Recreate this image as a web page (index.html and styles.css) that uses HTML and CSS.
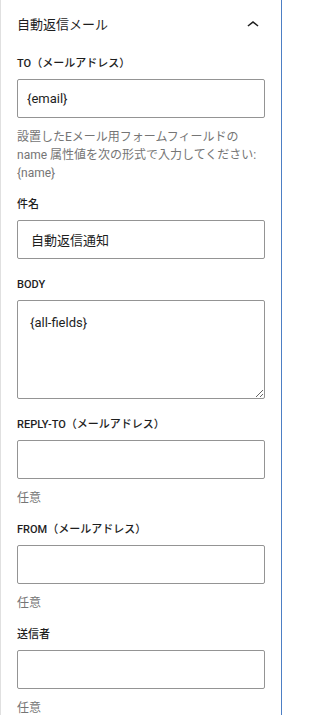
FILE: index.html
```html
<!DOCTYPE html>
<html lang="ja">
<head>
<meta charset="utf-8">
<title>自動返信メール</title>
<link rel="stylesheet" href="styles.css">
</head>
<body>
<div class="panel">
  <div class="panel-header">
    <span class="panel-title">自動返信メール</span>
    <svg class="chevron" width="24" height="24" viewBox="0 0 24 24" aria-hidden="true"><path d="M6.5 12.4L12 8l5.5 4.4-.9 1.2L12 10l-4.6 3.6-1-1.2z"/></svg>
  </div>
  <div class="panel-body">
    <div class="field field--help">
      <label class="field-label">TO（メールアドレス）</label>
      <input class="field-input" type="text" value="{email}">
      <p class="field-help">設置したEメール用フォームフィールドの<br>name 属性値を次の形式で入力してください:<br>{name}</p>
    </div>
    <div class="field">
      <label class="field-label">件名</label>
      <input class="field-input field-input--wide" type="text" value="自動返信通知">
    </div>
    <div class="field">
      <label class="field-label">BODY</label>
      <textarea class="field-textarea">{all-fields}</textarea>
    </div>
    <div class="field field--help">
      <label class="field-label">REPLY-TO（メールアドレス）</label>
      <input class="field-input" type="text" value="">
      <p class="field-help">任意</p>
    </div>
    <div class="field field--help">
      <label class="field-label">FROM（メールアドレス）</label>
      <input class="field-input" type="text" value="">
      <p class="field-help">任意</p>
    </div>
    <div class="field field--help">
      <label class="field-label">送信者</label>
      <input class="field-input" type="text" value="">
      <p class="field-help">任意</p>
    </div>
  </div>
</div>
</body>
</html>
```

FILE: styles.css
```css
* {
  box-sizing: border-box;
}

html, body {
  margin: 0;
  padding: 0;
  background: #ffffff;
}

body {
  font-family: Roboto, "Noto Sans CJK JP", sans-serif;
  color: #1e1e1e;
}

.panel {
  width: 282px;
  min-height: 715px;
  border-left: 1px solid #e0e0e0;
  border-right: 1px solid #4d7fc4;
  background: #ffffff;
}

.panel-header {
  height: 50px;
  padding: 0 16px;
  display: flex;
  align-items: center;
  justify-content: space-between;
}

.panel-title {
  font-size: 13px;
  font-weight: 400;
  line-height: 20px;
  color: #1e1e1e;
}

.chevron {
  display: block;
  fill: #1e1e1e;
}

.panel-body {
  padding: 6px 16px 0;
  display: flex;
  flex-direction: column;
}

.field {
  display: flex;
  flex-direction: column;
  margin-bottom: 18px;
}

.field--help {
  margin-bottom: 15px;
}

.field-label {
  font-size: 11px;
  font-weight: 500;
  line-height: 15px;
  margin-bottom: 8px;
  color: #1e1e1e;
  text-transform: uppercase;
}

.field-input,
.field-textarea {
  display: block;
  width: 100%;
  margin: 0;
  border: 1px solid #949494;
  border-radius: 2px;
  background: #ffffff;
  font-family: Roboto, "Noto Sans CJK JP", sans-serif;
  font-size: 13px;
  color: #1e1e1e;
  outline: none;
}

.field-input {
  height: 39px;
  padding: 0 9px;
  line-height: 18px;
}

.field-input--wide {
  padding-left: 13px;
}

.field-textarea {
  height: 99px;
  padding: 13px 12px;
  line-height: 18px;
  resize: vertical;
}

.field-help {
  margin: 10px 0 0;
  font-size: 12px;
  line-height: 18px;
  color: #757575;
}
```
